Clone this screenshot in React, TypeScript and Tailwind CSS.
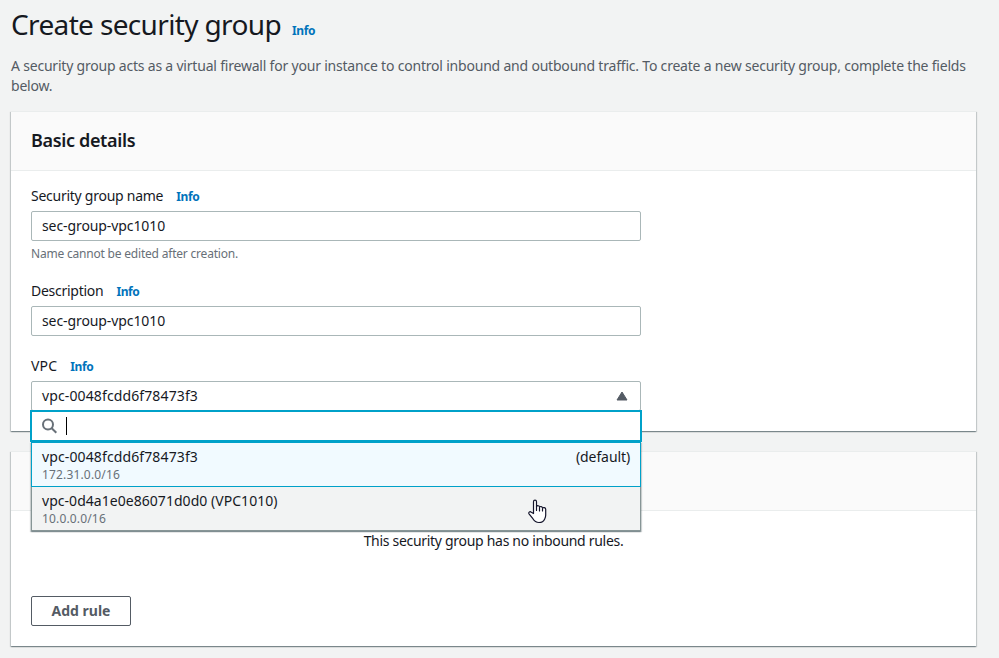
import type { ReactNode } from 'react';

function Info({ className = '' }: { className?: string }) {
  return (
    <a className={`text-[12px] font-bold leading-5 tracking-[-0.4px] text-[#0073bb] ${className}`}>Info</a>
  );
}

function Panel({ title, className, children }: { title?: string; className: string; children: ReactNode }) {
  return (
    <section
      className={`border-t border-[#eaeded] bg-white shadow-[0_1px_1px_0_rgba(0,28,36,0.3),1px_1px_1px_0_rgba(0,28,36,0.15),-1px_1px_1px_0_rgba(0,28,36,0.15)] ${className}`}
    >
      <header className="flex h-[59px] items-center border-b border-[#eaeded] bg-[#fafafa] px-5 pb-[2px]">
        <h2 className="text-[18px] font-semibold leading-[22px] tracking-[-0.35px]">{title}</h2>
      </header>
      <div className="px-5">{children}</div>
    </section>
  );
}

function Label({ children, className }: { children: string; className: string }) {
  return (
    <div className="flex h-5 items-center">
      <label className={`leading-5 ${className}`}>{children}</label>
      <Info className="ml-[13px] pt-px" />
    </div>
  );
}

function Field({ value }: { value: string }) {
  return (
    <div className="mt-[5px] flex h-[30px] w-[610px] items-center rounded-[2px] border border-[#aab7b8] bg-white px-[10px] pb-[2px] tracking-[-0.09px]">
      {value}
    </div>
  );
}

function Dropdown() {
  return (
    <div className="absolute left-[-1px] top-[29px] z-10 w-[612px]">
      <div className="flex h-[32px] items-center border-2 border-[#00a1c9] bg-white px-[9px]">
        <svg width="16" height="16" viewBox="0 0 16 16" fill="none" stroke="#687078" strokeWidth="2">
          <circle cx="7" cy="6.5" r="5" />
          <path d="M10.700 10.200 15.300 14.800" />
        </svg>
        <span className="ml-[9px] h-[18px] w-px bg-black" />
      </div>
      <div className="mx-px shadow-[0_1px_1px_0_rgba(0,28,36,0.3),1px_1px_1px_0_rgba(0,28,36,0.15),-1px_1px_1px_0_rgba(0,28,36,0.15)]">
        <div className="h-[45px] border border-[#00a1c9] bg-[#f1faff] px-[10px] pt-[4px]">
          <div className="flex justify-between leading-5">
            <span className="tracking-[0.12px]">vpc-0048fcdd6f78473f3</span>
            <span className="tracking-[-0.1px]">(default)</span>
          </div>
          <div className="text-[12px] leading-4 tracking-[0.16px] text-[#687078]">172.31.0.0/16</div>
        </div>
        <div className="h-[44px] border-x border-b border-[#879596] bg-[#f2f3f3] px-[10px] pt-[4px]">
          <div className="leading-5 tracking-[0.04px]">vpc-0d4a1e0e86071d0d0 (VPC1010)</div>
          <div className="text-[12px] leading-4 tracking-[0.16px] text-[#687078]">10.0.0.0/16</div>
        </div>
      </div>
    </div>
  );
}

function HandPointer() {
  return (
    <svg
      className="absolute left-[528px] top-[499px] z-20"
      width="19"
      height="25"
      viewBox="0 0 19 25"
      fill="#fff"
      stroke="#14142b"
      strokeWidth="1.2"
      strokeLinejoin="round"
      strokeLinecap="round"
    >
      <path d="M5.5 14.500V2.800c0-2.200 3-2.200 3 0V7.500c.6-1.200 3-1 3 .6.700-1 2.900-.7 3 .9.800-.8 3.200-.5 3.200 1.300v6c0 1.500-.5 2.600-1 3.600-.9 2-2.700 3.600-5.700 3.600-3.200 0-4.800-1.500-6.100-3.800L1 14.800c-.8-1.700 1-2.800 2.300-1.500z" />
      <path d="M8.500 7.500v4M11.500 8.500v3.500M14.500 9.500V12" fill="none" />
    </svg>
  );
}

export default function App() {
  return (
    <main className="relative h-[658px] w-full overflow-hidden bg-[#f2f3f3] pl-[11px] pr-[23px] pt-[6px] font-['Noto_Sans',sans-serif] text-[14px] text-[#16191f]">
      <div className="flex h-9 items-baseline">
        <h1 className="text-[28px] leading-9 tracking-[-0.64px]">Create security group</h1>
        <Info className="ml-[11px]" />
      </div>
      <p className="mt-[14px] whitespace-nowrap leading-5 tracking-[-0.203px] text-[#545b64]">
        A security group acts as a virtual firewall for your instance to control inbound and outbound traffic. To create a
        new security group, complete the fields
        <br />
        below.
      </p>

      <Panel title="Basic details" className="mt-[15px] h-[320px]">
        <div className="pt-[15px]">
          <Label className="tracking-[-0.26px]">Security group name</Label>
          <Field value="sec-group-vpc1010" />
          <p className="mt-[5px] text-[12px] leading-4 tracking-[-0.2px] text-[#687078]">
            Name cannot be edited after creation.
          </p>
        </div>
        <div className="mt-[19px]">
          <Label className="tracking-[-0.27px]">Description</Label>
          <Field value="sec-group-vpc1010" />
        </div>
        <div className="mt-[20px]">
          <Label className="tracking-[0.2px]">VPC</Label>
          <div className="relative mt-[5px] w-[610px]">
            <div className="flex h-[30px] items-center justify-between rounded-[2px] border border-[#aab7b8] px-[10px]">
              <span className="pb-[2px] tracking-[0.12px]">vpc-0048fcdd6f78473f3</span>
              <svg className="mr-[2px]" width="12" height="10" viewBox="0 0 12 10">
                <path d="M6 1 11 9H1z" fill="#545b64" stroke="#545b64" strokeLinejoin="round" />
              </svg>
            </div>
            <Dropdown />
          </div>
        </div>
      </Panel>

      <Panel className="mt-[20px] h-[195px]">
        <p className="pt-[20px] text-center leading-5 tracking-[-0.3px]">This security group has no inbound rules.</p>
        <button className="mt-[45px] h-[30px] w-[100px] rounded-[2px] border border-[#545b64] bg-white font-bold leading-5 text-[#545b64]">
          Add rule
        </button>
      </Panel>
      <HandPointer />
    </main>
  );
}
